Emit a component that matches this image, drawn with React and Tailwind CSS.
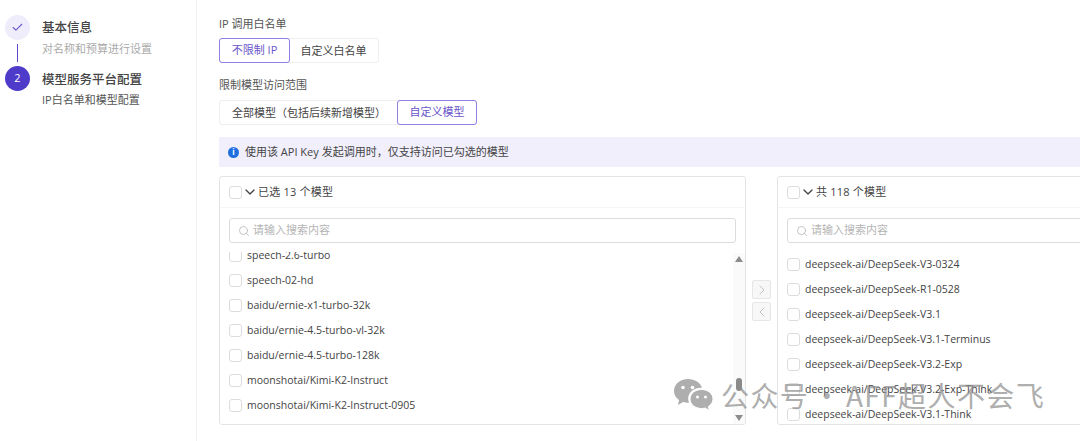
import React from "react";
import { Check, ChevronDown, ChevronLeft, ChevronRight, Search } from "lucide-react";

const FONT = "font-['Open_Sans','Noto_Sans_CJK_SC',sans-serif]";

const selectedModels = [
  "speech-2.6-turbo",
  "speech-02-hd",
  "baidu/ernie-x1-turbo-32k",
  "baidu/ernie-4.5-turbo-vl-32k",
  "baidu/ernie-4.5-turbo-128k",
  "moonshotai/Kimi-K2-Instruct",
  "moonshotai/Kimi-K2-Instruct-0905",
];

const allModels = [
  "deepseek-ai/DeepSeek-V3-0324",
  "deepseek-ai/DeepSeek-R1-0528",
  "deepseek-ai/DeepSeek-V3.1",
  "deepseek-ai/DeepSeek-V3.1-Terminus",
  "deepseek-ai/DeepSeek-V3.2-Exp",
  "deepseek-ai/DeepSeek-V3.2-Exp-Think",
  "deepseek-ai/DeepSeek-V3.1-Think",
];

const Box = () => (
  <span className="h-[13px] w-[13px] shrink-0 rounded-[3px] border border-[#dcdcdc] bg-white" />
);

const Segment = ({ active, children, className = "" }) => (
  <div
    className={`flex h-[25px] items-center justify-center rounded-[3px] text-[11px] ${
      active
        ? "border border-[#8f7fe0] text-[#6a55c9]"
        : "text-[#444]"
    } ${className}`}
  >
    {children}
  </div>
);

const Panel = ({ title, items, className, listClass, innerClass, children }) => (
  <div className={`h-[249px] shrink-0 overflow-hidden rounded-[3px] border border-[#e4e4e4] bg-white ${className}`}>
    <div className="flex h-[31px] items-center border-b border-[#f5f5f5] pl-[9px] text-[11px] text-[#444]">
      <Box />
      <ChevronDown className="h-4 w-4 text-[#444]" strokeWidth={2} />
      <span className="tracking-[0.2px]">{title}</span>
    </div>
    <div className="px-[9px] pt-[10px]">
      <div className="flex h-[25px] w-[507px] items-center gap-[3px] rounded-[3px] border border-[#dcdcdc] pl-[8px] text-[11px] text-[#b5b5b5]">
        <Search className="h-[12px] w-[12px]" strokeWidth={1.6} />
        <span>请输入搜索内容</span>
      </div>
    </div>
    <div className="relative flow-root">
      <div className={listClass}>
        <div className={innerClass}>
          {items.map((name) => (
            <div key={name} className="flex h-[25px] items-center gap-[5px] pl-[9px] text-[10.5px] text-[#444]">
              <Box />
              <span>{name}</span>
            </div>
          ))}
        </div>
      </div>
      {children}
    </div>
  </div>
);

export default function App() {
  return (
    <div className={`relative flex h-[441px] w-[1080px] overflow-hidden bg-white ${FONT}`}>
      {/* Steps */}
      <aside className="h-full w-[197px] shrink-0 border-r border-[#f0f0f0] pl-[5px] pt-[15px]">
        <div className="flex gap-[12px]">
          <div className="flex flex-col items-center">
            <span className="flex h-[25px] w-[25px] items-center justify-center rounded-full bg-[#efecfb]">
              <Check className="h-[13px] w-[13px] text-[#6f5ad0]" strokeWidth={2} />
            </span>
            <span className="mt-[4px] h-[18px] w-px bg-[#5a48c8]" />
          </div>
          <div>
            <div className="text-[12.5px] font-medium leading-[25px] text-[#444]">基本信息</div>
            <div className="mt-[1px] text-[11px] leading-[16px] text-[#aaa]">对名称和预算进行设置</div>
          </div>
        </div>
        <div className="mt-[4px] flex gap-[12px]">
          <span className="flex h-[25px] w-[25px] items-center justify-center rounded-full bg-[#4f3bc9] text-[11px] text-white">
            2
          </span>
          <div className="pt-[1px]">
            <div className="text-[12.5px] font-medium leading-[25px] text-[#444]">模型服务平台配置</div>
            <div className="text-[11px] leading-[16px] text-[#555]">IP白名单和模型配置</div>
          </div>
        </div>
      </aside>

      {/* Form */}
      <main className="min-w-0 flex-1 pl-[22px] pt-[16px]">
        <div className="text-[11px] leading-[16px] text-[#555]">IP 调用白名单</div>
        <div className="mt-[6px] flex h-[25px] w-[160px] rounded-[3px] border border-[#eeeeee]">
          <Segment active className="-m-px h-[25px] w-[71px]">不限制 IP</Segment>
          <Segment className="h-[23px] flex-1">自定义白名单</Segment>
        </div>
        <div className="mt-[14px] text-[11px] leading-[16px] text-[#555]">限制模型访问范围</div>
        <div className="mt-[7px] flex h-[25px] w-[258px] rounded-[3px] border border-[#eeeeee]">
          <Segment className="h-[23px] w-[178px]">全部模型（包括后续新增模型）</Segment>
          <Segment active className="-m-px h-[25px] flex-1">自定义模型</Segment>
        </div>
        <div className="mt-[12px] flex h-[30px] items-center gap-[6px] bg-[#f1effc] pl-[9px] text-[11px] text-[#444]">
          <span className="flex h-[11px] w-[11px] items-center justify-center rounded-full bg-[#1f6fe0] text-[8px] font-bold leading-none text-white">
            i
          </span>
          <span>使用该 API Key 发起调用时，仅支持访问已勾选的模型</span>
        </div>

        <div className="mt-[9px] flex w-[900px] items-start">
          <Panel
            title="已选 13 个模型"
            items={selectedModels}
            className="w-[527px]"
            listClass="mt-[9px] h-[172px] overflow-hidden"
            innerClass="-mt-[9px]"
          >
            <div className="absolute bottom-0 right-0 top-[10px] flex w-[12px] flex-col items-center bg-[#fafafa]">
              <span className="mt-[3px] h-0 w-0 shrink-0 border-x-[4px] border-b-[6px] border-x-transparent border-b-[#8c8c8c]" />
              <span className="mt-[116px] h-[13px] w-[6px] shrink-0 rounded-[3px] bg-[#8a8a8a]" />
              <span className="mt-[24px] h-0 w-0 shrink-0 border-x-[4px] border-t-[6px] border-x-transparent border-t-[#8c8c8c]" />
            </div>
          </Panel>

          <div className="flex w-[31px] shrink-0 flex-col items-center gap-[3px] pt-[104px]">
            <span className="flex h-[19px] w-[19px] items-center justify-center rounded-[2px] border border-[#e6e6e6] bg-[#f7f7f7]">
              <ChevronRight className="h-4 w-4 text-[#b5b5b5]" strokeWidth={1.2} />
            </span>
            <span className="flex h-[19px] w-[19px] items-center justify-center rounded-[2px] border border-[#e6e6e6] bg-[#f7f7f7]">
              <ChevronLeft className="h-4 w-4 text-[#b5b5b5]" strokeWidth={1.2} />
            </span>
          </div>

          <Panel
            title="共 118 个模型"
            items={allModels}
            className="w-[340px]"
            listClass="pt-[9px]"
          />
        </div>
      </main>

      {/* WeChat watermark */}
      <div className="pointer-events-none absolute left-[673px] top-[377px] flex items-center gap-[7px] text-[#8c8c8c] opacity-70">
        <svg width="41" height="36" viewBox="0 0 41 36" fill="currentColor">
          <path d="M15 2C7 2 1 7 1 14c0 4 2 7 5 9l-1 5 5-3c2 .6 3.500.8 5 .8h1c-.5-1.300-.8-2.600-.8-4 0-6.500 5.800-11 12.800-11h1C27.500 5.500 21.800 2 15 2z" />
          <path
            d="M40 22c0-5.500-5.200-9.500-11.500-9.500S17 16.500 17 22s5.200 9.500 11.500 9.500c1.300 0 2.500-.2 3.700-.5l4 2.500-.8-4c2.700-1.800 4.600-4.500 4.600-7.500z"
            stroke="#fff"
            strokeWidth="1"
          />
          <circle cx="10" cy="10.500" r="1.800" fill="#fff" />
          <circle cx="19.500" cy="10.500" r="1.800" fill="#fff" />
          <circle cx="24.500" cy="20" r="1.500" fill="#fff" />
          <circle cx="32.500" cy="20" r="1.500" fill="#fff" />
        </svg>
        <span className="whitespace-nowrap font-['Noto_Sans_CJK_SC',sans-serif] text-[28px] leading-none tracking-[1.4px] [word-spacing:-4px]">
          公众号 · AFF超人不会飞
        </span>
      </div>
    </div>
  );
}
